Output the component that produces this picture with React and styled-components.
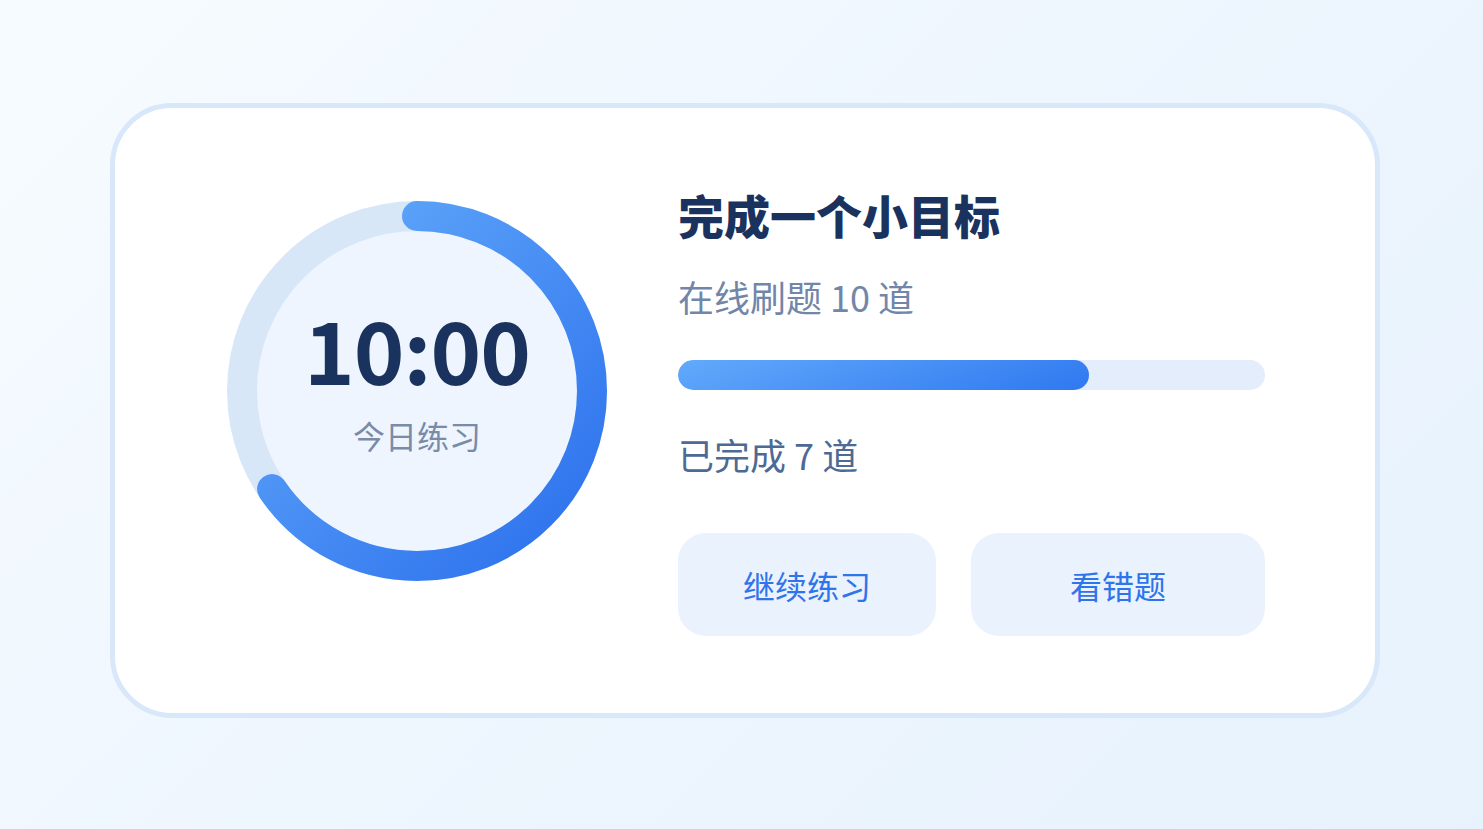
import React from 'react'
import styled, { createGlobalStyle } from 'styled-components'

const GlobalStyle = createGlobalStyle`
  html, body {
    margin: 0;
    padding: 0;
  }
  body {
    font-family: "Noto Sans CJK SC", "Noto Sans", sans-serif;
  }
`

const Page = styled.div`
  min-height: 100vh;
  box-sizing: border-box;
  padding: 103px 0 0 110px;
  background: linear-gradient(135deg, #f6fbff 0%, #eef6fe 50%, #e7f2fd 100%);
`

const Card = styled.section`
  box-sizing: border-box;
  width: 1270px;
  height: 615px;
  display: flex;
  align-items: flex-start;
  gap: 71px;
  padding: 93px 110px 0 112px;
  background: #fff;
  border: 5px solid #d8e7f9;
  border-radius: 62px;
`

const Ring = styled.div`
  width: 380px;
  height: 380px;
  flex: none;
  display: grid;
  place-items: center;
  > * {
    grid-area: 1 / 1;
  }
`

const RingText = styled.div`
  display: flex;
  flex-direction: column;
  align-items: center;
  margin-top: -26px;
  .time {
    font-size: 86px;
    line-height: 1;
    font-weight: 700;
    color: #1a325e;
    letter-spacing: -1px;
  }
  .label {
    margin-top: 28px;
    font-size: 32px;
    line-height: 1;
    color: #7a8ba8;
  }
`

const Info = styled.div`
  flex: 1;
  margin-top: -10px;
  display: flex;
  flex-direction: column;
`

const Title = styled.h2`
  margin: 0;
  font-size: 46px;
  line-height: 1;
  font-weight: 900;
  color: #1a325e;
`

const Line = styled.p`
  margin: ${p => p.$top}px 0 0;
  font-size: 36px;
  line-height: 1;
  color: ${p => p.$color};
`

const Track = styled.div`
  margin-top: 46px;
  height: 30px;
  border-radius: 15px;
  background: #e3edfb;
  overflow: hidden;
`

const Fill = styled.div`
  height: 100%;
  border-radius: 15px;
  background: linear-gradient(160deg, #62aafb 0%, #2f78f0 100%);
`

const Actions = styled.div`
  margin-top: 61px;
  display: grid;
  grid-template-columns: 258fr 294fr;
  gap: 35px;
`

const Button = styled.button`
  height: 103px;
  border: none;
  border-radius: 28px;
  background: #eaf2fe;
  color: #2f74ea;
  font-family: inherit;
  font-size: 32px;
  cursor: pointer;
`

function ProgressRing({ value }) {
  const r = 175
  const c = 2 * Math.PI * r
  // the arc is rotated -90deg, so the gradient axis is given in that rotated frame
  return (
    <svg width="380" height="380" viewBox="0 0 380 380">
      <defs>
        <linearGradient id="ringGrad" x1="1" y1="0" x2="0" y2="1">
          <stop offset="0%" stopColor="#66aefc" />
          <stop offset="100%" stopColor="#2b6fec" />
        </linearGradient>
      </defs>
      <circle cx="190" cy="190" r={r} fill="#eef5fe" stroke="#d7e7f8" strokeWidth="30" />
      <circle
        cx="190"
        cy="190"
        r={r}
        fill="none"
        stroke="url(#ringGrad)"
        strokeWidth="30"
        strokeLinecap="round"
        strokeDasharray={`${c * value} ${c}`}
        transform="rotate(-90 190 190)"
      />
    </svg>
  )
}

export default function App() {
  const done = 7
  const total = 10
  return (
    <Page>
      <GlobalStyle />
      <Card>
        <Ring>
          <ProgressRing value={0.655} />
          <RingText>
            <span className="time">10:00</span>
            <span className="label">今日练习</span>
          </RingText>
        </Ring>
        <Info>
          <Title>完成一个小目标</Title>
          <Line $top={41} $color="#7186a8">在线刷题 {total} 道</Line>
          <Track>
            <Fill style={{ width: `${(done / total) * 100}%` }} />
          </Track>
          <Line $top={46} $color="#4d6a94">已完成 {done} 道</Line>
          <Actions>
            <Button>继续练习</Button>
            <Button>看错题</Button>
          </Actions>
        </Info>
      </Card>
    </Page>
  )
}
